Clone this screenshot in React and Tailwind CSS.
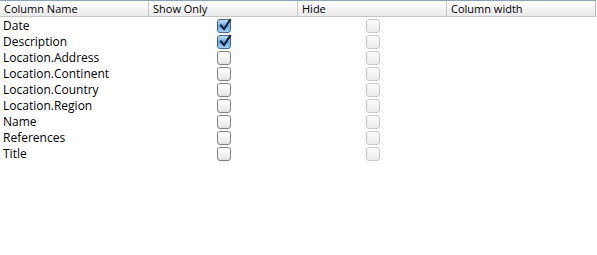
import React from "react";

const rows = [
  { name: "Date", show: true },
  { name: "Description", show: true },
  { name: "Location.Address", show: false },
  { name: "Location.Continent", show: false },
  { name: "Location.Country", show: false },
  { name: "Location.Region", show: false },
  { name: "Name", show: false },
  { name: "References", show: false },
  { name: "Title", show: false },
];

function Box({ checked, disabled }) {
  if (checked) {
    return (
      <div className="relative w-[14px] h-[14px] rounded-[3px] border border-[#3d6791] bg-gradient-to-b from-[#c4def7] via-[#6aa8e6] to-[#a7d0f6]">
        <svg viewBox="0 0 14 14" className="absolute left-[0px] top-[-2px] w-[14px] h-[14px]">
          <path d="M3 7.5 L6 11 L12 2" fill="none" stroke="#14243a" strokeWidth="2.2" strokeLinecap="square" />
        </svg>
      </div>
    );
  }
  if (disabled) {
    return <div className="w-[14px] h-[14px] rounded-[3px] border border-[#c9c9c9] bg-gradient-to-b from-[#fbfbfb] to-[#ececec]" />;
  }
  return <div className="w-[14px] h-[14px] rounded-[3px] border border-[#858585] bg-gradient-to-b from-[#ffffff] to-[#e4e4e4] shadow-[0_1px_0_rgba(0,0,0,0.08)]" />;
}

export default function App() {
  return (
    <div className="w-[597px] h-[255px] bg-white font-['Open_Sans','DejaVu_Sans',sans-serif] text-black">
      <div className="w-[596px] h-[17px] border-t border-[#8aa3bb] border-b border-b-[#c4c4c4] border-r border-r-[#b9b9b9] bg-gradient-to-b from-[#ffffff] to-[#e9e9e9] grid grid-cols-[149px_149px_149px_149px] text-[11px] leading-[15px]">
        <div className="pl-[4px] border-r border-[#c8c8c8]">Column Name</div>
        <div className="pl-[4px] border-r border-[#c8c8c8]">Show Only</div>
        <div className="pl-[4px] border-r border-[#c8c8c8]">Hide</div>
        <div className="pl-[4px]">Column width</div>
      </div>
      <div className="pt-[1px]">
        {rows.map((r) => (
          <div key={r.name} className="h-[16px] grid grid-cols-[149px_149px_149px_149px] items-center text-[12px] leading-[16px]">
            <div className="pl-[3px]">{r.name}</div>
            <div className="flex justify-center"><Box checked={r.show} /></div>
            <div className="flex justify-center"><Box disabled /></div>
            <div />
          </div>
        ))}
      </div>
    </div>
  );
}
